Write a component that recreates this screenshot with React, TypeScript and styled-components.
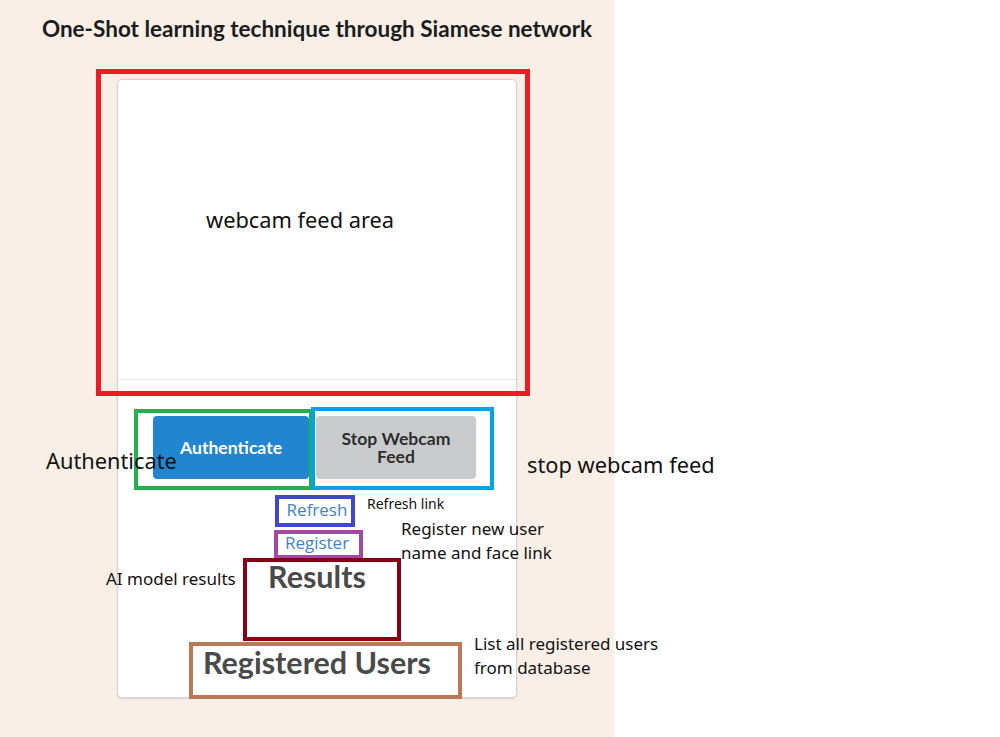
import React from "react";
import styled, { createGlobalStyle } from "styled-components";

const GlobalStyle = createGlobalStyle`
  html, body {
    margin: 0;
    padding: 0;
    background: #ffffff;
  }
  body {
    font-family: Lato, "Liberation Sans", sans-serif;
  }
`;

type Note = {
  left: number;
  top: number;
  width: number;
  height: number;
  color: string;
  thick?: number;
};

const BOXES: Note[] = [
  { left: 96, top: 69, width: 434, height: 327, color: "#ed1c24", thick: 5 },
  { left: 134, top: 409, width: 179, height: 81, color: "#22b14c", thick: 4 },
  { left: 311, top: 407, width: 183, height: 83, color: "#00a2e8", thick: 4 },
  { left: 275, top: 495, width: 80, height: 32, color: "#3f48cc", thick: 4 },
  { left: 274, top: 530, width: 89, height: 29, color: "#a349a4", thick: 4 },
  { left: 243, top: 558, width: 158, height: 83, color: "#880015", thick: 4 },
  { left: 189, top: 642, width: 273, height: 57, color: "#b97a57", thick: 4 },
];

const LABELS = [
  { left: 206, top: 204, size: 21.8, text: ["webcam feed area"] },
  { left: 46, top: 445, size: 21.8, text: ["Authenticate"] },
  { left: 527, top: 449, size: 21.8, text: ["stop webcam feed"] },
  { left: 367, top: 494, size: 14, text: ["Refresh link"] },
  { left: 401, top: 517, size: 17, text: ["Register new user", "name and face link"] },
  { left: 106, top: 567, size: 17, text: ["AI model results"] },
  { left: 474, top: 632, size: 17, text: ["List all registered users", "from database"] },
];

function App() {
  return (
    <>
      <GlobalStyle />
      <Page>
        <Panel>
          <Title>One-Shot learning technique through Siamese network</Title>
          <Card>
            <Webcam />
            <CardBody>
              <ButtonRow>
                <Button kind="primary">Authenticate</Button>
                <Button kind="grey">
                  Stop Webcam
                  <br />
                  Feed
                </Button>
              </ButtonRow>
              <LinkText href="#">Refresh</LinkText>
              <LinkText href="#">Register</LinkText>
              <Heading>Results</Heading>
              <Results />
              <Heading>Registered Users</Heading>
            </CardBody>
          </Card>
        </Panel>

        {/* annotation layer drawn over the mockup */}
        {BOXES.map((b, i) => (
          <Box
            key={"box-" + i}
            style={{
              left: b.left,
              top: b.top,
              width: b.width,
              height: b.height,
              borderColor: b.color,
              borderWidth: b.thick,
            }}
          />
        ))}
        {LABELS.map((l, i) => (
          <Label key={"label-" + i} size={l.size} style={{ left: l.left, top: l.top }}>
            {l.text.map((t, j) => (
              <div key={j}>{t}</div>
            ))}
          </Label>
        ))}
      </Page>
    </>
  );
}

const Page = styled.div`
  position: relative;
  width: 1000px;
  height: 737px;
  overflow: hidden;
`;

const Panel = styled.div`
  width: 614px;
  height: 737px;
  box-sizing: border-box;
  padding-left: 20px;
  background: #f9efe6;
  display: flex;
  flex-direction: column;
  align-items: center;
`;

const Title = styled.h1`
  margin: 14px 0 0;
  font-family: Lato, sans-serif;
  font-weight: 700;
  font-size: 22.5px;
  line-height: 30px;
  color: #1b1c1d;
  white-space: nowrap;
`;

const Card = styled.div`
  margin-top: 35px;
  width: 400px;
  height: 619px;
  box-sizing: border-box;
  background: #ffffff;
  border: 1px solid #d4d4d5;
  border-radius: 5px;
  box-shadow: 0 1px 2px rgba(0, 0, 0, 0.12);
  display: flex;
  flex-direction: column;
`;

const Webcam = styled.div`
  height: 299px;
  border-bottom: 1px solid #e5e5e5;
`;

const CardBody = styled.div`
  display: flex;
  flex-direction: column;
  align-items: center;
  padding-top: 36px;
`;

const ButtonRow = styled.div`
  display: flex;
  gap: 7px;
  margin-left: -5px;
  margin-bottom: 14px;
`;

const Button = styled.button<{ kind: "primary" | "grey" }>`
  width: ${(p) => (p.kind === "primary" ? "156px" : "160px")};
  height: 63px;
  border: none;
  border-radius: 4px;
  font-family: Lato, sans-serif;
  font-weight: 700;
  font-size: 17.6px;
  line-height: 18px;
  padding: 0;
  background: ${(p) => (p.kind === "primary" ? "#2185d0" : "#cacbcd")};
  color: ${(p) => (p.kind === "primary" ? "#ffffff" : "rgba(0, 0, 0, 0.8)")};
`;

const LinkText = styled.a`
  font-family: "Open Sans", "Noto Sans", sans-serif;
  font-size: 17px;
  line-height: 33px;
  color: #4183c4;
  text-decoration: none;
`;

const Heading = styled.h2`
  margin: 0;
  font-family: Lato, sans-serif;
  font-weight: 700;
  font-size: 30.5px;
  line-height: 34px;
  color: #4a4a4a;
`;

const Results = styled.div`
  height: 52px;
`;

const Box = styled.div`
  position: absolute;
  box-sizing: border-box;
  border-style: solid;
`;

const Label = styled.div<{ size: number }>`
  position: absolute;
  font-family: "Noto Sans", "Open Sans", sans-serif;
  font-size: ${(p) => p.size}px;
  line-height: ${(p) => Math.round(p.size * 1.4)}px;
  color: #111111;
  white-space: nowrap;
`;

export default App;
